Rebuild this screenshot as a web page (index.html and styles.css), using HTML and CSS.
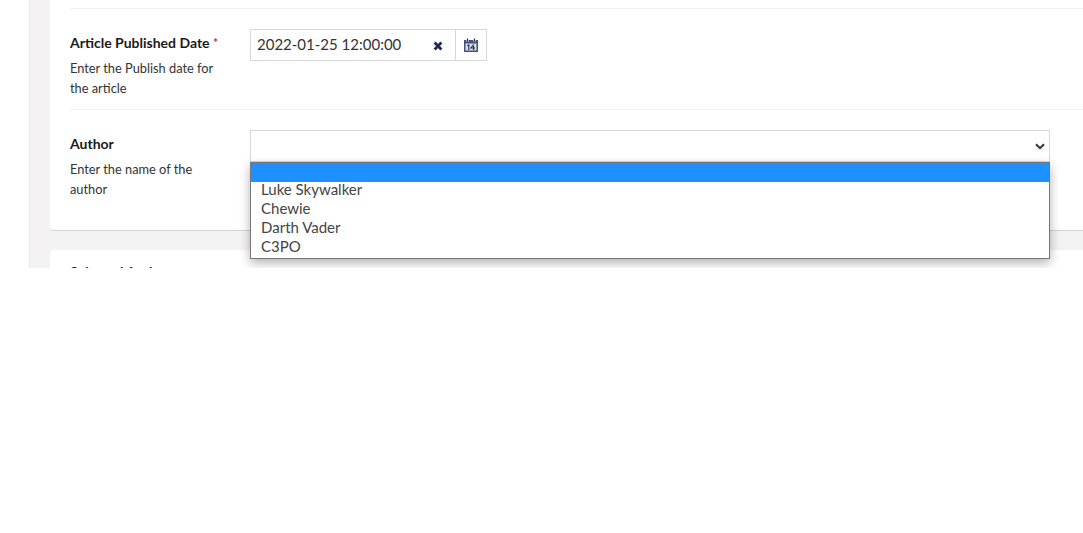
FILE: index.html
```html
<!DOCTYPE html>
<html lang="en">
<head>
<meta charset="utf-8">
<title>Article</title>
<link rel="stylesheet" href="styles.css">
</head>
<body>
<div class="frame">
  <main class="content">
    <section class="card first">
      <div class="row date-row">
        <div class="label-col">
          <div class="label">Article Published Date <span class="req">*</span></div>
          <div class="desc">Enter the Publish date for the article</div>
        </div>
        <div class="field">
          <div class="date-input">
            <span class="date-value">2022-01-25 12:00:00</span>
            <span class="clear">
              <svg width="10" height="10" viewBox="0 0 10 10"><path d="M1.6 1.6 8.4 8.4M8.4 1.6 1.6 8.4" stroke="#1c2a56" stroke-width="2.8" fill="none"/></svg>
            </span>
            <span class="cal">
              <svg width="14" height="14" viewBox="0 0 14 14"><path d="M0 2h14v12H0z" fill="#47527a"/><path d="M1.5 5.5h11V12.5h-11z" fill="#d9dce6"/><path d="M3.5 .5v3M10.5 .5v3" stroke="#fff" stroke-width="2.4"/><path d="M3.5 .5v3M10.5 .5v3" stroke="#1c2a56" stroke-width="1.2"/><path d="M4.8 6.5v5.4M3.4 7.8l1.4-1.2M9.6 6.5 7 10h3.8M9.6 8v3.9" stroke="#1c2a56" stroke-width="1.1" fill="none"/></svg>
            </span>
          </div>
        </div>
      </div>
      <div class="row author-row">
        <div class="label-col">
          <div class="label">Author</div>
          <div class="desc">Enter the name of the author</div>
        </div>
        <div class="field">
          <div class="select">
            <svg width="10" height="7" viewBox="0 0 10 7"><path d="M1 1.2 5 5.2 9 1.2" stroke="#333" stroke-width="2" fill="none"/></svg>
            <ul class="options">
              <li class="active"></li>
              <li>Luke Skywalker</li>
              <li>Chewie</li>
              <li>Darth Vader</li>
              <li>C3PO</li>
            </ul>
          </div>
        </div>
      </div>
    </section>
    <section class="card second">
      <div class="label">Selected Authors</div>
    </section>
  </main>
</div>
</body>
</html>
```
FILE: styles.css
```css
html, body {
  margin: 0;
  padding: 0;
  background: #fff;
}
body {
  font-family: Lato, "Liberation Sans", sans-serif;
  color: #1c1c1c;
}
.frame {
  height: 268px;
  overflow: hidden;
  padding-left: 29px;
}
.content {
  border-left: 1px solid #e8e6e6;
  background: #f4f2f2;
  padding-left: 20px;
  height: 268px;
  box-sizing: border-box;
}
.card {
  background: #fff;
}
.first {
  height: 231px;
  box-sizing: border-box;
  padding: 8px 0 0 20px;
  border-bottom: 1px solid #d4d4d4;
  border-bottom-left-radius: 4px;
}
.second {
  margin-top: 19px;
  padding: 8px 20px;
  border-top-left-radius: 4px;
}
.row {
  display: flex;
  border-top: 1px solid #f1f1f1;
}
.date-row {
  height: 101px;
  padding-top: 20px;
  box-sizing: border-box;
}
.author-row {
  padding-top: 20px;
}
.label-col {
  width: 180px;
}
.label {
  font-size: 14px;
  font-weight: 700;
  line-height: 28px;
  color: #1a1a1a;
}
.req {
  color: #d81b60;
  font-size: 12px;
  vertical-align: 1px;
}
.desc {
  width: 150px;
  font-size: 12.8px;
  line-height: 20px;
  color: #333;
  margin-top: 1px;
}
.field {
  flex: 1;
}
.date-input {
  display: flex;
  align-items: center;
  width: 237px;
  height: 32px;
  box-sizing: border-box;
  border: 1px solid #d8d8d8;
}
.date-value {
  flex: 1;
  padding-left: 6px;
  padding-bottom: 2px;
  font-size: 15px;
  color: #333;
}
.clear {
  display: flex;
  width: 22px;
  margin-top: 2px;
  box-sizing: border-box;
}
.cal {
  display: flex;
  justify-content: center;
  align-items: center;
  width: 30px;
  height: 30px;
  border-left: 1px solid #d8d8d8;
}
.select {
  position: relative;
  display: flex;
  align-items: center;
  justify-content: flex-end;
  width: 800px;
  height: 32px;
  box-sizing: border-box;
  padding-right: 4px;
  border: 1px solid #d8d8d8;
}
.options {
  position: absolute;
  left: -1px;
  top: 31px;
  width: 800px;
  box-sizing: border-box;
  margin: 0;
  padding: 0;
  list-style: none;
  background: #fff;
  border: 1px solid #767676;
  box-shadow: 0 4px 10px rgba(0, 0, 0, 0.3);
  font-size: 15px;
  line-height: 15px;
  color: #444;
}
.options li {
  height: 19px;
  padding-left: 10px;
}
.options .active {
  background: #1e90ff;
}
```
